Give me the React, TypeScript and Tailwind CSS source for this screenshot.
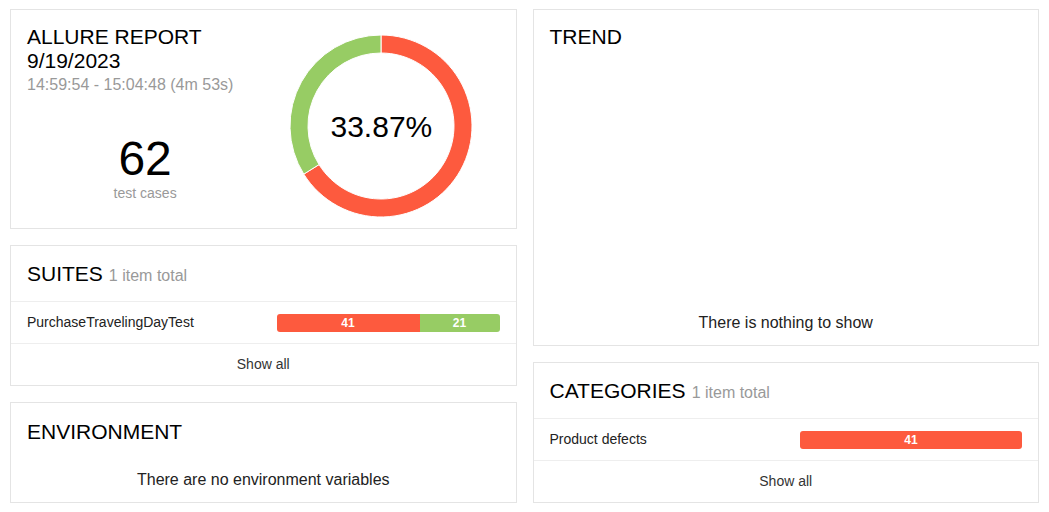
import React from 'react';

const font = { fontFamily: '"Liberation Sans", Arial, sans-serif' };

function Donut() {
    // 62 tests: 41 failed, 21 passed (33.87%)
    return (
        <div className="relative h-[182px] w-[182px]">
            <svg width="182" height="182" viewBox="0 0 182 182" className="overflow-visible">
                <path
                    d="M 91 0 A 91 91 0 1 1 13.77 139.13 L 29.04 129.61 A 73 73 0 1 0 91 18 Z"
                    fill="#fd5a3e"
                    stroke="#ffffff"
                    strokeWidth="1"
                />
                <path
                    d="M 13.77 139.13 A 91 91 0 0 1 91 0 L 91 18 A 73 73 0 0 0 29.04 129.61 Z"
                    fill="#97cc64"
                    stroke="#ffffff"
                    strokeWidth="1"
                />
            </svg>
            <div className="absolute inset-0 flex items-center justify-center text-[30px] text-black">33.87%</div>
        </div>
    );
}

function WidgetHeader({ title, subtitle }: { title: string; subtitle?: string }) {
    return (
        <div className="flex h-[56px] items-baseline border-b border-[#eeeeee] px-4 pt-4">
            <span className="text-[21px] leading-6 text-black">{title}</span>
            {subtitle && <span className="ml-[6px] text-[16px] leading-6 text-[#999999]">{subtitle}</span>}
        </div>
    );
}

function ShowAll() {
    return <div className="flex h-[41px] items-center justify-center text-[14px] text-[#333333]">Show all</div>;
}

export default function App() {
    return (
        <div className="min-h-screen bg-white px-[10px] pt-[9px]" style={font}>
            <div className="grid grid-cols-2 gap-4">
                {/* Left column */}
                <div className="flex flex-col gap-4">
                    {/* Summary */}
                    <div className="flex h-[220px] border border-[#e4e4e4] px-4 pt-[15px]">
                        <div className="flex flex-1 flex-col">
                            <div className="text-[21px] leading-6 text-black">ALLURE REPORT</div>
                            <div className="text-[21px] leading-6 text-black">9/19/2023</div>
                            <div className="text-[16px] leading-6 text-[#999999]">14:59:54 - 15:04:48 (4m 53s)</div>
                            <div className="mt-[38px] text-center">
                                <div className="text-[48px] leading-none text-black">62</div>
                                <div className="text-[14px] leading-5 text-[#999999]">test cases</div>
                            </div>
                        </div>
                        <div className="flex flex-1 justify-center pt-[10px]">
                            <Donut />
                        </div>
                    </div>

                    {/* Suites */}
                    <div className="border border-[#e4e4e4]">
                        <WidgetHeader title="SUITES" subtitle="1 item total" />
                        <div className="flex h-[42px] items-center border-b border-[#eeeeee] px-4">
                            <div className="flex-1 text-[14px] text-[#222222]">PurchaseTravelingDayTest</div>
                            <div className="flex h-[18px] w-[223px] overflow-hidden rounded-[3px] text-[12px] font-bold leading-[18px] text-white">
                                <div className="w-[143px] bg-[#fd5a3e] text-center">41</div>
                                <div className="flex-1 bg-[#97cc64] text-center">21</div>
                            </div>
                        </div>
                        <ShowAll />
                    </div>

                    {/* Environment */}
                    <div className="border border-[#e4e4e4]">
                        <div className="px-4 pt-[17px] text-[21px] leading-6 text-black">ENVIRONMENT</div>
                        <div className="pt-6 pb-[10px] text-center text-[16px] leading-6 text-[#222222]">
                            There are no environment variables
                        </div>
                    </div>
                </div>

                {/* Right column */}
                <div className="flex flex-col gap-4">
                    {/* Trend */}
                    <div className="flex h-[337px] flex-col justify-between border border-[#e4e4e4]">
                        <div className="px-4 pt-[15px] text-[21px] leading-6 text-black">TREND</div>
                        <div className="pb-[10px] text-center text-[16px] leading-6 text-[#222222]">There is nothing to show</div>
                    </div>

                    {/* Categories */}
                    <div className="border border-[#e4e4e4]">
                        <WidgetHeader title="CATEGORIES" subtitle="1 item total" />
                        <div className="flex h-[42px] items-center border-b border-[#eeeeee] px-4">
                            <div className="flex-1 text-[14px] text-[#222222]">Product defects</div>
                            <div className="h-[18px] w-[222px] rounded-[3px] bg-[#fd5a3e] text-center text-[12px] font-bold leading-[18px] text-white">
                                41
                            </div>
                        </div>
                        <ShowAll />
                    </div>
                </div>
            </div>
        </div>
    );
}
